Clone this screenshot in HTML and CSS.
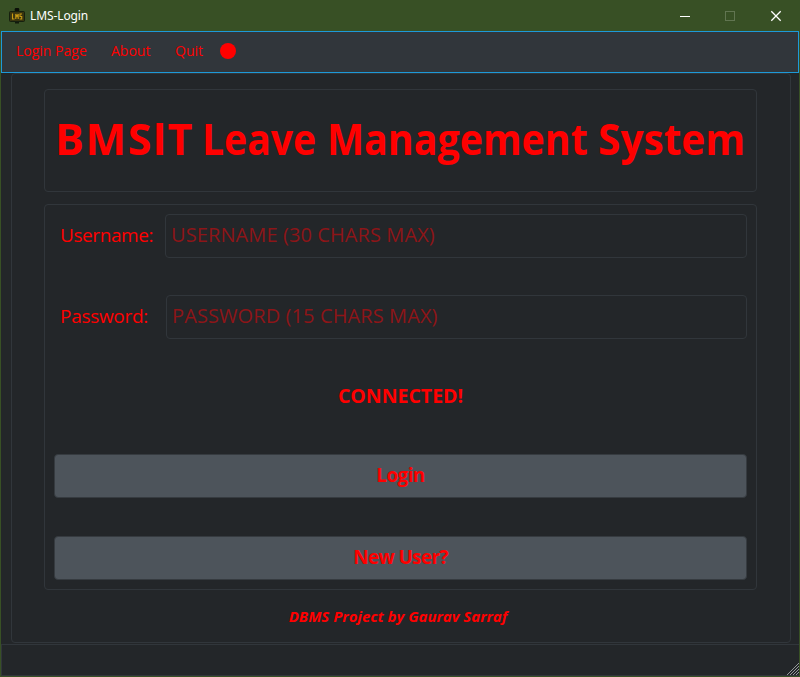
FILE: index.html
```html
<!DOCTYPE html>
<html lang="en">
<head>
<meta charset="utf-8">
<title>LMS-Login</title>
<link rel="stylesheet" href="styles.css">
</head>
<body>
<div class="window">
  <header class="titlebar">
    <svg class="app-icon" width="16" height="16" viewBox="0 0 16 16">
      <circle cx="8" cy="2" r="2.400" fill="#0b0f08"/>
      <rect x="0.500" y="3.500" width="15" height="10" rx="1" fill="#39350f" stroke="#15200f"/>
      <path d="M6 14h4v1.500H6z" fill="#11190d"/>
      <path d="M3.500 5.500v5.500h2M6.800 11V6l1.200 2.500L9.200 6v5M13 6h-2v2.500h1.700V11h-2" fill="none" stroke="#c79a14" stroke-width="1.100"/>
    </svg>
    <span class="title">LMS-Login</span>
    <svg class="controls" width="138" height="30" viewBox="0 0 138 30" fill="none">
      <path d="M19 15.500h10" stroke="#fff"/>
      <rect x="64.500" y="10.500" width="9" height="9" stroke="#617551"/>
      <path d="M110.300 10.300l9.400 9.400M119.700 10.300l-9.400 9.400" stroke="#fff" stroke-width="1.300"/>
    </svg>
  </header>
  <nav class="menubar">
    <span class="menu-login">Login Page</span>
    <span class="menu-about">About</span>
    <span class="menu-quit">Quit</span>
    <i class="dot"></i>
  </nav>
  <main class="page">
    <section class="banner">
      <h1>
        <span class="word bmsit">BMS<span class="plain-i">I</span>T</span>
        <span class="word leave">Leave</span>
        <span class="word management">Management</span>
        <span class="word system">System</span>
      </h1>
    </section>
    <section class="form">
      <div class="row">
        <label class="user-label" for="user">Username:</label>
        <input class="user-input" id="user" placeholder="USERNAME (30 CHARS MAX)">
      </div>
      <div class="row">
        <label class="pass-label" for="pass">Password:</label>
        <input class="pass-input" id="pass" placeholder="PASSWORD (15 CHARS MAX)">
      </div>
      <p class="state">CONNECTED!</p>
      <button class="login">Login</button>
      <button class="new-user">New User?</button>
    </section>
    <p class="credit">DBMS Project by Gaurav Sarraf</p>
  </main>
  <footer class="statusbar">
    <svg width="12" height="12" viewBox="0 0 12 12" stroke="#a2a5a7" stroke-width="0.900">
      <path d="M0 12L12 0M3 12L12 3M6 12L12 6M9 12L12 9"/>
    </svg>
  </footer>
</div>
</body>
</html>
```

FILE: styles.css
```css
* { box-sizing: border-box; }
body {
  margin: 0;
  background: #232629;
  color: #f00;
  font-family: "Open Sans", "Noto Sans", sans-serif;
}
.window {
  width: 800px;
  height: 677px;
  display: flex;
  flex-direction: column;
  border: 1px solid #385025;
  border-top: 0;
  background: #232629;
}
.titlebar {
  height: 31px;
  flex: none;
  display: flex;
  align-items: center;
  padding-left: 8px;
  background: #385025;
}
.title {
  margin-left: 5px;
  color: #fff;
  font: 12px/30px "Noto Sans", sans-serif;
  letter-spacing: -0.1px;
}
.controls { margin-left: auto; }
.menubar {
  height: 42px;
  flex: none;
  display: flex;
  align-items: center;
  padding: 0 0 2px 14px;
  border: 1px solid #1d99d8;
  background: #31363b;
  font-size: 14px;
  white-space: nowrap;
}
.menu-login, .menu-about, .menu-quit { padding-bottom: 1px; }
.menu-login { width: 95px; }
.menu-about { width: 64px; }
.menu-quit { width: 45px; }
.dot {
  width: 16px;
  height: 16px;
  border-radius: 50%;
  background: #f00;
}
.page {
  width: 780px;
  height: 570px;
  flex: none;
  margin-left: 10px;
  padding: 15px 32px 0;
  border: 1px solid #31363b;
  border-radius: 4px;
}
.banner, .form {
  width: 713px;
  border: 1px solid #31363b;
  border-radius: 4px;
}
.banner {
  height: 103px;
  display: flex;
  align-items: center;
  padding-left: 10px;
}
h1 {
  display: flex;
  width: 692px;
  margin: 0 0 4px;
  font-size: 43px;
  line-height: 60px;
  white-space: nowrap;
}
.word {
  flex: none;
  transform-origin: left center;
}
.bmsit { width: 147px; letter-spacing: 1.6px; }
.leave { width: 125px; transform: scaleX(0.91); }
.management { width: 271px; transform: scaleX(0.915); }
.system { width: 148px; transform: scaleX(0.945); }
.plain-i { font-family: Lato, sans-serif; font-weight: 900; }
.form {
  height: 386px;
  margin-top: 12px;
  padding: 9px 9px 0;
}
.row {
  height: 44px;
  display: flex;
  align-items: center;
  margin-bottom: 37px;
}
label {
  flex: none;
  padding: 0 0 2px 6px;
  font-size: 19px;
  line-height: 40px;
  letter-spacing: -0.42px;
}
.user-label { width: 111px; }
.pass-label { width: 112px; letter-spacing: -0.3px; }
input {
  flex: 1;
  min-width: 0;
  height: 44px;
  padding: 0 6px 3px 5px;
  border: 1px solid #31363b;
  border-radius: 4px;
  background: #232629;
  color: #f00;
  font: 20px "Open Sans", sans-serif;
  letter-spacing: 0.1px;
}
input::placeholder { color: #8d1518; opacity: 1; }
.state {
  height: 42px;
  margin: 0 0 36px;
  font-size: 19.5px;
  font-weight: 700;
  line-height: 40px;
  text-align: center;
}
button {
  display: block;
  width: 693px;
  height: 44px;
  padding: 0 0 2px;
  border: 1px solid #363b40;
  border-radius: 4px;
  background: #4d545b;
  color: #f00;
  font: 700 19px "Open Sans", sans-serif;
  letter-spacing: -0.65px;
}
.new-user { margin-top: 38px; }
.credit {
  margin: 15px 6px 0 0;
  font-size: 15px;
  font-style: italic;
  font-weight: 700;
  line-height: 22px;
  text-align: center;
}
.statusbar {
  height: 32px;
  flex: none;
  display: flex;
  align-items: flex-end;
  justify-content: flex-end;
  margin-top: 1px;
  border: 1px solid #31363b;
  border-right: 0;
}
```
